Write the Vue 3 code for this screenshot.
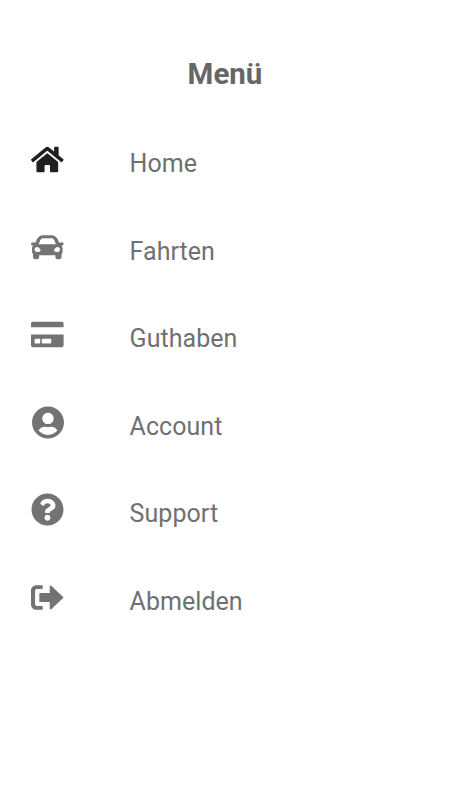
<script setup>
const items = [
  { label: 'Home', active: true, box: '0 0 576 512', w: 32.6, path: 'M280.37 148.26L96 300.11V464a16 16 0 0 0 16 16l112.06-.29a16 16 0 0 0 15.92-16V368a16 16 0 0 1 16-16h64a16 16 0 0 1 16 16v95.64a16 16 0 0 0 16 16.05L464 480a16 16 0 0 0 16-16V300L295.67 148.26a12.19 12.19 0 0 0-15.3 0zM571.6 251.47L488 182.56V44.05a12 12 0 0 0-12-12h-56a12 12 0 0 0-12 12v72.61L318.47 43a48 48 0 0 0-61 0L4.34 251.47a12 12 0 0 0-1.6 16.9l25.5 31A12 12 0 0 0 45.15 301l235.22-193.74a12.19 12.19 0 0 1 15.3 0L530.9 301a12 12 0 0 0 16.9-1.6l25.5-31a12 12 0 0 0-1.7-16.93z' },
  { label: 'Fahrten', box: '0 0 512 512', w: 32.6, path: 'M499.99 176h-59.87l-16.64-41.6C406.38 91.63 365.57 64 319.5 64h-127c-46.06 0-86.88 27.63-103.99 70.4L71.87 176H12.01C4.2 176-1.53 183.34.37 190.91l6 24C7.7 220.25 12.5 224 18.01 224h20.07C24.65 235.73 16 252.78 16 272v48c0 16.12 6.16 30.67 16 41.93V410c0 17.67 14.33 30 32 30h32c17.67 0 32-14.33 32-30v-32h256v32c0 17.67 14.33 30 32 30h32c17.67 0 32-14.33 32-30v-48.070c9.84-11.25 16-25.8 16-41.93v-48c0-19.22-8.65-36.27-22.07-48H494c5.51 0 10.31-3.75 11.64-9.09l6-24c1.89-7.57-3.84-14.91-11.65-14.91zM144 146c8-20 26-34 48.500-34h127c22 0 40 14 48 34l24 58H120zM96 326c-23 0-40-15-40-38s17-40 40-40 54 32 54 54-31 24-54 24zm320 0c-23 0-54-2-54-24s31-54 54-54 40 17 40 40-17 38-40 38z' },
  { label: 'Guthaben', box: '0 0 576 512', w: 32.6, path: 'M0 448c0 18 14 32 32 32h512c18 0 32-14 32-32V256H0v192zm192-104c0-6.600 5.400-12 12-12h142c6.600 0 12 5.400 12 12v60c0 6.600-5.400 12-12 12H204c-6.600 0-12-5.400-12-12v-60zm-128 0c0-6.600 5.400-12 12-12h76c6.600 0 12 5.400 12 12v60c0 6.600-5.400 12-12 12H76c-6.600 0-12-5.400-12-12v-60zM576 64v64H0V64c0-18 14-32 32-32h512c18 0 32 14 32 32z' },
  { label: 'Account', box: '0 0 496 512', w: 32, path: 'M248 8C111 8 0 119 0 256s111 248 248 248 248-111 248-248S385 8 248 8zm0 96c48.600 0 88 39.400 88 88s-39.400 88-88 88-88-39.400-88-88 39.400-88 88-88zm0 344c-58.700 0-111.300-26.600-146.500-68.200 18.800-35.400 55.600-59.800 98.500-59.800 2.400 0 4.800.4 7.100 1.100 13 4.200 26.600 6.900 40.900 6.900 14.300 0 28-2.700 40.900-6.900 2.300-.7 4.700-1.100 7.100-1.100 42.900 0 79.700 24.400 98.500 59.800C359.300 421.400 306.700 448 248 448z' },
  { label: 'Support', box: '0 0 512 512', w: 33, path: 'M504 256c0 136.997-111.043 248-248 248S8 392.997 8 256C8 119.083 119.043 8 256 8s248 111.083 248 248zM262.655 90c-54.497 0-89.255 22.957-116.549 63.758-3.536 5.286-2.353 12.415 2.715 16.258l34.699 26.310c5.205 3.947 12.621 3.008 16.665-2.122 17.864-22.658 30.113-35.797 57.303-35.797 20.429 0 45.698 13.148 45.698 32.958 0 14.976-12.363 22.667-32.534 33.976C247.128 238.528 216 254.941 216 296v4c0 6.627 5.373 12 12 12h56c6.627 0 12-5.373 12-12v-1.333c0-28.462 83.186-29.647 83.186-106.667 0-58.002-60.165-102-116.531-102zM256 338c-25.365 0-46 20.635-46 46 0 25.364 20.635 46 46 46s46-20.636 46-46c0-25.365-20.635-46-46-46z' },
  { label: 'Abmelden', box: '0 0 512 512', w: 32.6, path: 'M505 263L318 440c-9 9-24 3-24-10V326H140c-5 0-9-4-9-9V195c0-5 4-9 9-9h154V82c0-13 15-19 24-10l187 177c4 4 4 10 0 14zM184 440v-44c0-5-4-8-8-8H92c-16 0-28-12-28-28V152c0-16 12-28 28-28h84c4 0 8-3 8-8V72c0-5-4-8-8-8H84C38 64 0 102 0 148v216c0 46 38 84 84 84h92c4 0 8-3 8-8z' },
]
</script>

<template>
  <main class="menu">
    <h1>Menü</h1>
    <nav>
      <a v-for="item in items" :key="item.label" class="item" :class="{ active: item.active }">
        <span class="icon"><svg :viewBox="item.box" :width="item.w" height="33"><path :d="item.path" /></svg></span>
        <span class="label">{{ item.label }}</span>
      </a>
    </nav>
  </main>
</template>

<style scoped>
.menu {
  box-sizing: border-box;
  width: 450px;
  height: 800px;
  padding-top: 54px;
  background: #fff;
  color: #707070;
  font-family: Roboto, sans-serif;
}
h1 {
  margin: 0;
  color: #666;
  font-size: 29.5px;
  line-height: 40px;
  font-weight: 700;
  text-align: center;
}
nav {
  padding-top: 26.5px;
}
.item {
  display: flex;
  align-items: center;
  height: 87.5px;
  box-sizing: border-box;
  padding-left: 30px;
}
.icon {
  display: flex;
  justify-content: center;
  width: 35px;
  padding-bottom: 9px;
  margin-right: 64.6px;
}
svg {
  display: block;
  fill: #737373;
}
.active svg {
  fill: #202020;
}
.label {
  font-size: 25px;
  line-height: 30px;
  letter-spacing: 0.04px;
}
</style>
<style>
body {
  margin: 0;
  background: #fff;
}
</style>
